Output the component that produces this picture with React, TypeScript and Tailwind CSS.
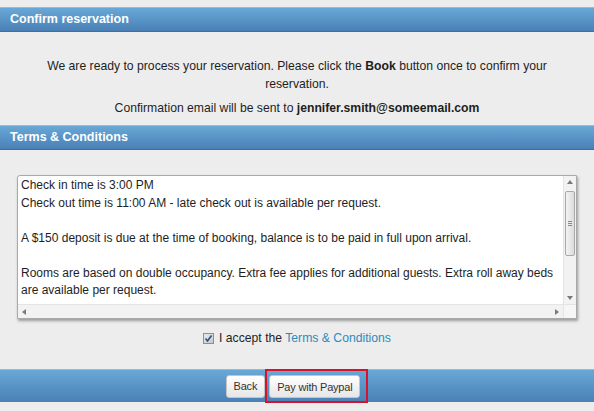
import React from "react";

const font = { fontFamily: '"Liberation Sans", Arial, sans-serif' };

function SectionBar({ title }: { title: string }) {
  return (
    <div className="h-[24px] flex items-center px-[10px] border-t border-[#8cc0e3] bg-gradient-to-b from-[#69a8d6] to-[#4a80b6] shadow-[0_1px_0_#3d6f9f]">
      <span className="text-[12.5px] font-bold text-white">{title}</span>
    </div>
  );
}

function Arrow({ dir }: { dir: "up" | "down" | "left" | "right" }) {
  const pts = {
    up: "0,4 3,0 6,4",
    down: "0,0 3,4 6,0",
    left: "4,0 0,3 4,6",
    right: "0,0 4,3 0,6",
  }[dir];
  const vert = dir === "up" || dir === "down";
  return (
    <svg width={vert ? 6 : 4} height={vert ? 4 : 6} viewBox={vert ? "0 0 6 4" : "0 0 4 6"}>
      <polygon points={pts} fill="#7a7a7a" />
    </svg>
  );
}

const btn =
  "h-[23px] px-[7px] rounded-[3px] border border-[#c4c4c4] bg-gradient-to-b from-white to-[#e6e6e6] text-[11px] tracking-[-0.2px] text-[#333]";

export default function App() {
  const lines = [
    "Check in time is 3:00 PM",
    "Check out time is 11:00 AM - late check out is available per request.",
    "",
    "A $150 deposit is due at the time of booking, balance is to be paid in full upon arrival.",
    "",
    "Rooms are based on double occupancy. Extra fee applies for additional guests. Extra roll away beds",
    "are available per request.",
  ];

  return (
    <div className="w-[594px] h-[411px] overflow-hidden bg-[#ededed] text-[#1e1e1e]" style={font}>
      <div className="h-[7px]" />
      <SectionBar title="Confirm reservation" />

      <div className="pt-[26px] pb-[8px] text-center text-[12.2px] leading-[18px]">
        <p>
          We are ready to process your reservation. Please click the <b>Book</b> button once to confirm your
          <br />
          reservation.
        </p>
        <p className="mt-[6px]">
          Confirmation email will be sent to <b>jennifer.smith@someemail.com</b>
        </p>
      </div>

      <SectionBar title="Terms & Conditions" />

      <div className="pt-[26px] px-[17px]">
        <div className="h-[144px] flex flex-col bg-white border border-[#a9a9a9] rounded-tl-[3px] shadow-[1px_2px_3px_rgba(0,0,0,0.35)]">
          <div className="flex flex-1 min-h-0">
            <div className="flex-1 pl-[3px] pt-[1px] text-[12px] leading-[17.5px] overflow-hidden whitespace-nowrap">
              {lines.map((l, i) => (
                <div key={i} className="h-[17.5px]">{l}</div>
              ))}
            </div>
            {/* vertical scrollbar */}
            <div className="w-[13px] bg-[#f2f2f2] border-l border-[#e4e4e4] flex flex-col items-center">
              <div className="h-[12px] flex items-center justify-center"><Arrow dir="up" /></div>
              <div className="mt-[3px] w-[10px] h-[65px] rounded-[2px] border border-[#a8a8a8] bg-gradient-to-r from-[#f3f3f3] to-[#dcdcdc] flex flex-col items-center justify-center gap-[1px]">
                <div className="w-[4px] h-px bg-[#8a8a8a]" />
                <div className="w-[4px] h-px bg-[#8a8a8a]" />
                <div className="w-[4px] h-px bg-[#8a8a8a]" />
              </div>
              <div className="flex-1" />
              <div className="h-[12px] flex items-center justify-center"><Arrow dir="down" /></div>
            </div>
          </div>
          {/* horizontal scrollbar */}
          <div className="h-[14px] flex border-t border-[#e4e4e4]">
            <div className="flex-1 bg-[#f2f2f2] flex items-center justify-between px-[4px]">
              <Arrow dir="left" />
              <Arrow dir="right" />
            </div>
            <div className="w-[13px] bg-[#f6f6f6] border-l border-[#e4e4e4]" />
          </div>
        </div>
      </div>

      <div className="h-[37px] flex items-center justify-center gap-[5px] pt-[1px] text-[12.2px]">
        <span className="w-[11px] h-[11px] border border-[#8f8f8f] bg-gradient-to-br from-[#e9e9e9] to-[#c9c9c9] flex items-center justify-center">
          <svg width="9" height="9" viewBox="0 0 9 9">
            <path d="M1.5 4.5 L3.5 7 L7.5 1.5" stroke="#2b4f8a" strokeWidth="1.6" fill="none" />
          </svg>
        </span>
        <span>
          I accept the <span className="text-[#2a8bc0]">Terms &amp; Conditions</span>
        </span>
      </div>

      <div className="mt-[13px] h-[33px] flex items-center justify-center border-t border-[#8cc0e3] bg-gradient-to-b from-[#69a8d6] to-[#4a80b6]">
        <button className={btn}>Back</button>
        <div className="pl-[2px] pr-[6px] py-[3px] border-2 border-[#d3142c]">
          <button className={btn}>Pay with Paypal</button>
        </div>
      </div>
    </div>
  );
}
